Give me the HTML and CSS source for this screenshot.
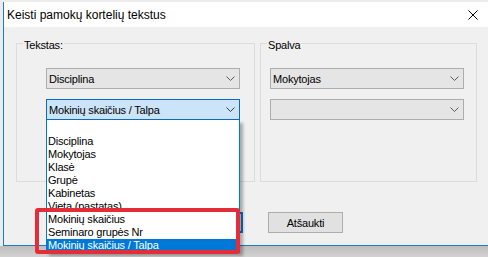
FILE: index.html
```html
<!DOCTYPE html>
<html>
<head>
    <title>Keisti pamokų kortelių tekstus</title>
    <link rel="stylesheet" href="styles.css">
</head>
<body>
    <div class="desk">
        <div class="window">
            <div class="titlebar">
                <span class="title">Keisti pamokų kortelių tekstus</span>
                <svg class="close" width="10" height="10" viewBox="0 0 10 10">
                    <path d="M0.5 0.5 L9.5 9.5 M9.5 0.5 L0.5 9.5" stroke="#000" stroke-width="1" fill="none"/>
                </svg>
            </div>
            <div class="content">
                <div class="groups">
                    <div class="group text-group">
                        <span class="legend">Tekstas:</span>
                        <div class="combo">
                            <span>Disciplina</span>
                            <svg class="chev" width="9" height="5" viewBox="0 0 9 5"><polyline points="0.5,0.5 4.5,4.5 8.5,0.5" fill="none" stroke="#5a5a5a"/></svg>
                        </div>
                        <div class="combo focused">
                            <span>Mokinių skaičius / Talpa</span>
                            <svg class="chev" width="9" height="5" viewBox="0 0 9 5"><polyline points="0.5,0.5 4.5,4.5 8.5,0.5" fill="none" stroke="#3c3c3c"/></svg>
                            <ul class="droplist">
                                <li>&nbsp;</li>
                                <li>Disciplina</li>
                                <li>Mokytojas</li>
                                <li>Klasė</li>
                                <li>Grupė</li>
                                <li>Kabinetas</li>
                                <li>Vieta (pastatas)</li>
                                <li>Mokinių skaičius</li>
                                <li>Seminaro grupės Nr</li>
                                <li class="selected">Mokinių skaičius / Talpa</li>
                            </ul>
                        </div>
                    </div>
                    <div class="group color-group">
                        <span class="legend">Spalva</span>
                        <div class="combo">
                            <span>Mokytojas</span>
                            <svg class="chev" width="9" height="5" viewBox="0 0 9 5"><polyline points="0.5,0.5 4.5,4.5 8.5,0.5" fill="none" stroke="#5a5a5a"/></svg>
                        </div>
                        <div class="combo">
                            <span></span>
                            <svg class="chev" width="9" height="5" viewBox="0 0 9 5"><polyline points="0.5,0.5 4.5,4.5 8.5,0.5" fill="none" stroke="#5a5a5a"/></svg>
                        </div>
                    </div>
                </div>
                <div class="buttons">
                    <button class="btn default">OK</button>
                    <button class="btn">Atšaukti</button>
                </div>
            </div>
            <!-- red highlight drawn over the list -->
            <div class="callout"></div>
        </div>
    </div>
    <div class="shadow"></div>
</body>
</html>
```

FILE: styles.css
```css
html, body {
    margin: 0;
    padding: 0;
}
body {
    width: 488px;
    height: 257px;
    overflow: hidden;
    background-color: #c9c9c9;
    font-family: "Liberation Sans", Arial, sans-serif;
    font-size: 11px;
    letter-spacing: -0.2px;
    color: #000;
}
.desk {
    padding: 2px 0 0 3px;
    background-color: #ececec;
}
.window {
    position: relative;
    height: 243px;
    border-left: 1px solid #1c7bd0;
    border-bottom: 1px solid #1c7bd0;
    background-color: #f0f0f0;
    display: flex;
    flex-direction: column;
}
.titlebar {
    height: 25px;
    background-color: #fff;
    display: flex;
    align-items: center;
    justify-content: space-between;
    padding-left: 3px;
    padding-right: 10px;
}
.title {
    font-size: 12px;
    letter-spacing: 0;
    line-height: 25px;
    padding-top: 1px;
}
.close {
    display: block;
    margin-top: 1px;
}
.content {
    padding: 16px 0 0 12px;
}
.groups {
    display: flex;
    gap: 5px;
}
.group {
    position: relative;
    box-sizing: border-box;
    height: 139px;
    border: 1px solid #dcdcdc;
    padding-top: 24px;
    display: flex;
    flex-direction: column;
    gap: 10px;
}
.text-group {
    width: 239px;
    padding-left: 29px;
}
.color-group {
    width: 217px;
    padding-left: 9px;
}
.legend {
    position: absolute;
    top: -5px;
    left: 6px;
    line-height: 13px;
    padding: 0 1px;
    background-color: #f0f0f0;
}
.combo {
    position: relative;
    box-sizing: border-box;
    width: 194px;
    height: 21px;
    border: 1px solid #adadad;
    background-color: #e5e5e5;
    display: flex;
    align-items: center;
    justify-content: space-between;
    padding: 1px 4px 0 2px;
    line-height: 13px;
}
.combo.focused {
    border-color: #0a6bc4;
    background-color: #cce4f7;
}
.chev {
    display: block;
    margin-top: -1px;
}
.droplist {
    position: absolute;
    top: 20px;
    left: -1px;
    box-sizing: border-box;
    width: 194px;
    margin: 0;
    padding: 2px 0 0 0;
    list-style: none;
    background-color: #fff;
    border: 1px solid #0078d7;
    border-top: 0;
    box-shadow: 3px 3px 3px rgba(0,0,0,0.3);
    z-index: 2;
}
.droplist li {
    height: 13px;
    line-height: 13px;
    padding-left: 1px;
    white-space: nowrap;
}
.droplist li.selected {
    background-color: #0078d7;
    color: #fff;
}
.buttons {
    display: flex;
    gap: 25px;
    margin-top: 30px;
    padding-left: 152px;
}
.btn {
    box-sizing: border-box;
    width: 75px;
    height: 21px;
    margin: 0;
    padding: 0;
    border: 1px solid #adadad;
    background-color: #e1e1e1;
    font-family: inherit;
    font-size: 11px;
    letter-spacing: -0.2px;
    color: #000;
}
.btn.default {
    border-color: #0078d7;
    box-shadow: inset 0 0 0 1px #0078d7;
}
/* Annotation box */
.callout {
    position: absolute;
    left: 31px;
    top: 206px;
    box-sizing: border-box;
    width: 205px;
    height: 46px;
    border: 4px solid #e52d3a;
    border-radius: 3px;
    z-index: 3;
}
.shadow {
    height: 11px;
    background: linear-gradient(#bdbdbd, #d2d2d2);
}
```
